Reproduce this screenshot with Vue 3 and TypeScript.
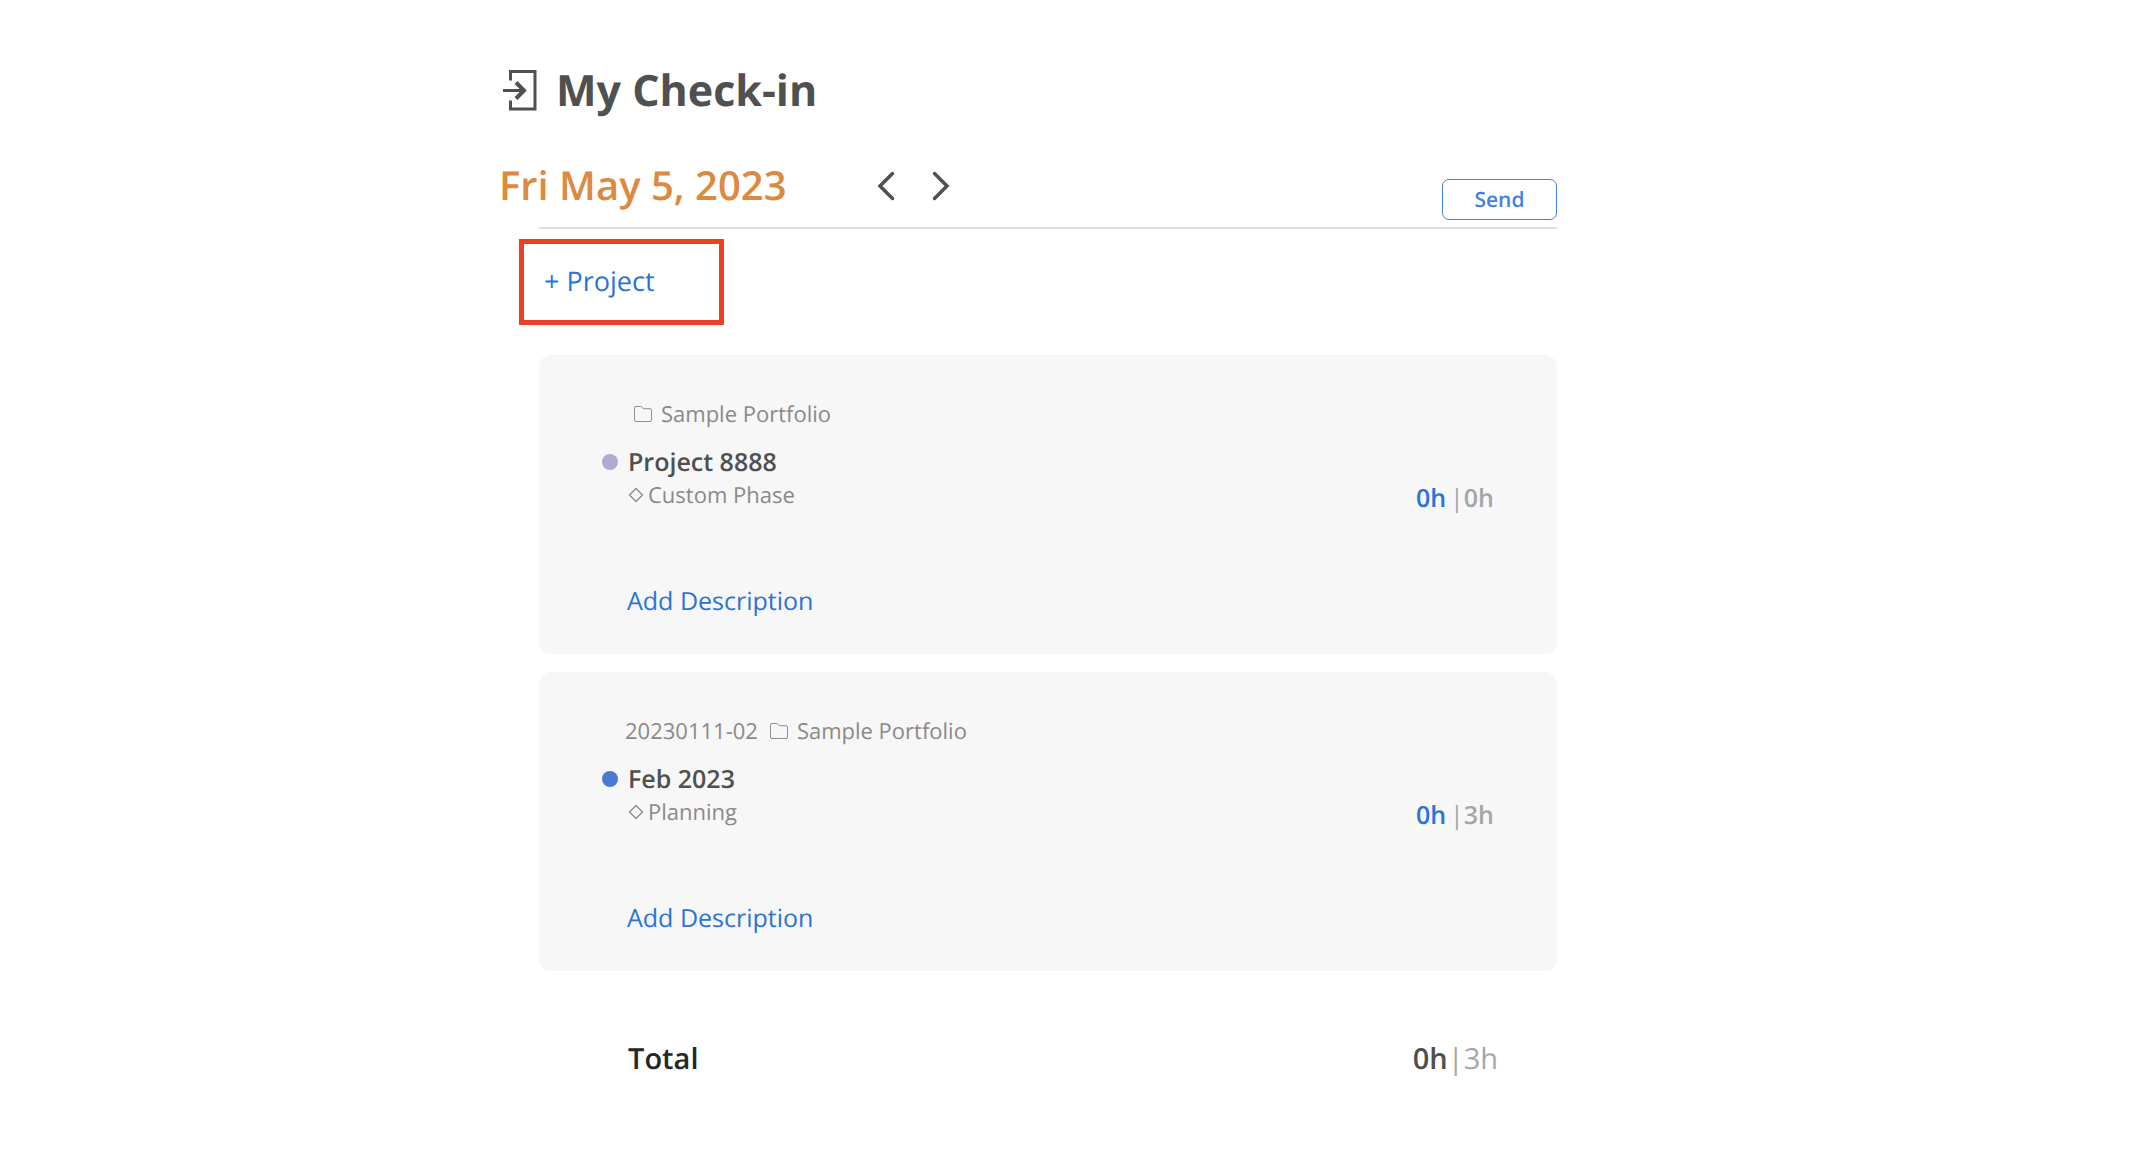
<script setup lang="ts">
interface Entry {
  id: number
  code: string
  portfolio: string
  project: string
  phase: string
  color: string
  spent: number
  planned: number
}

const entries: Entry[] = [
  { id: 1, code: '', portfolio: 'Sample Portfolio', project: 'Project 8888', phase: 'Custom Phase', color: '#b3a9d3', spent: 0, planned: 0 },
  { id: 2, code: '20230111-02', portfolio: 'Sample Portfolio', project: 'Feb 2023', phase: 'Planning', color: '#4a7ad2', spent: 0, planned: 3 },
]

const totalSpent = entries.reduce((sum, e) => sum + e.spent, 0)
const totalPlanned = entries.reduce((sum, e) => sum + e.planned, 0)
</script>

<template>
  <main class="page">
    <header class="head">
      <svg class="head-icon" width="36" height="44" viewBox="0 0 36 44" fill="none" stroke="#505050" aria-hidden="true">
        <path d="M7.500 12.500V3.500h24.500v37.500H7.500V32.500" stroke-width="3" />
        <path d="M0 22.500h21" stroke-width="3" />
        <path d="M13 14.500l8 8-8 8" stroke-width="4" />
      </svg>
      <h1>My Check-in</h1>
    </header>

    <div class="body">
      <div class="date-bar">
        <h2>Fri May 5, 2023</h2>
        <nav class="days">
          <button type="button" aria-label="Previous day">
            <svg width="19" height="30" viewBox="0 0 19 30" fill="none" stroke="#505050" stroke-width="3.500" stroke-linecap="round"><path d="M15.500 2.500L3 15l12.500 12.500" /></svg>
          </button>
          <button type="button" aria-label="Next day">
            <svg width="19" height="30" viewBox="0 0 19 30" fill="none" stroke="#505050" stroke-width="3.500" stroke-linecap="round"><path d="M3.500 2.500L16 15 3.500 27.500" /></svg>
          </button>
        </nav>
        <button type="button" class="send">Send</button>
      </div>

      <div class="highlight">
        <button type="button" class="link add-project">+ Project</button>
      </div>

      <section class="cards">
        <article v-for="e in entries" :key="e.id" class="card">
          <div class="meta">
            <span v-if="e.code" class="code">{{ e.code }}</span>
            <svg class="folder" width="20" height="18" viewBox="0 0 20 18" fill="none" stroke="#8f8f8f" aria-hidden="true">
              <path d="M1.500 3q0-1.500 1.500-1.500h4.500q1 0 1.600.8l.6.800q.5.600 1.300.600h6q1.500 0 1.500 1.500v9.800q0 1.500-1.500 1.500H3q-1.500 0-1.500-1.500z" />
            </svg>
            <span>{{ e.portfolio }}</span>
          </div>
          <div class="title">
            <span class="dot" :style="{ background: e.color }"></span>
            <h3>{{ e.project }}</h3>
          </div>
          <div class="work">
            <div class="phase">
              <svg width="16" height="16" viewBox="0 0 16 16" fill="none" stroke="#8a8a8a" stroke-width="1.300" aria-hidden="true"><path d="M8 1.500L14.500 8 8 14.500 1.500 8z" /></svg>
              <span>{{ e.phase }}</span>
            </div>
            <div class="hours">
              <span class="spent">{{ e.spent }}h</span>
              <span class="bar">|</span>
              <span class="planned">{{ e.planned }}h</span>
            </div>
          </div>
          <button type="button" class="link describe">Add Description</button>
        </article>
      </section>

      <footer class="total">
        <span>Total</span>
        <div class="sum">
          <span class="sum-spent">{{ totalSpent }}h</span><span class="sum-rest">|{{ totalPlanned }}h</span>
        </div>
      </footer>
    </div>
  </main>
</template>

<style>
body {
  background: #fff;
}
</style>

<style scoped>
.page {
  box-sizing: border-box;
  max-width: 1140px;
  margin: 0 auto;
  padding: 60px 83px 60px 0;
  font-family: "Open Sans", "Noto Sans", sans-serif;
  text-rendering: geometricPrecision;
  color: #505050;
}
h1, h2, h3 {
  margin: 0;
}
button {
  padding: 0;
  border: 0;
  background: none;
  font-family: inherit;
  text-rendering: inherit;
  cursor: pointer;
}
svg {
  display: block;
  flex: none;
}
.head {
  display: flex;
  align-items: center;
  gap: 17px;
  padding-left: 3px;
}
h1 {
  font-size: 43px;
  line-height: 60px;
  font-weight: 700;
}
.body {
  margin-left: 39px;
}
.date-bar {
  display: flex;
  align-items: flex-start;
  margin-top: 36px;
  padding-bottom: 7px;
  border-bottom: 2px solid #dcdcdc;
}
h2 {
  margin-left: -40px;
  font-size: 40px;
  line-height: 57px;
  font-weight: 600;
  color: #dd8a40;
}
.days {
  display: flex;
  align-items: center;
  gap: 35px;
  height: 60px;
  margin-left: 90px;
}
.send {
  width: 115px;
  height: 41px;
  margin: 23px 0 0 auto;
  border: 1px solid #4381e6;
  border-radius: 7px;
  font-size: 21px;
  line-height: 30px;
  font-weight: 600;
  color: #4381e6;
}
.link {
  color: #2b73d6;
  text-align: left;
}
.highlight {
  box-sizing: border-box;
  width: 205px;
  height: 86px;
  margin: 10px 0 30px -20px;
  padding: 19px 20px;
  border: 5px solid #ec4026;
}
.add-project {
  display: block;
  font-size: 27px;
  line-height: 36px;
}
.cards {
  display: flex;
  flex-direction: column;
  gap: 18px;
}
.card {
  padding: 44px 63px 35px;
  border-radius: 12px;
  background: #f7f7f7;
}
.meta {
  display: flex;
  align-items: center;
  gap: 8px;
  padding-left: 23px;
  font-size: 22px;
  line-height: 30px;
  color: #8a8a8a;
}
.folder {
  margin-left: 3px;
}
.folder:first-child {
  margin-left: 8px;
}
.title {
  display: flex;
  align-items: center;
  gap: 10px;
  margin-top: 15px;
}
.dot {
  width: 16px;
  height: 16px;
  border-radius: 50%;
}
h3 {
  font-size: 25px;
  line-height: 36px;
  font-weight: 600;
}
.work {
  display: flex;
  justify-content: space-between;
  padding-left: 26px;
}
.phase {
  display: flex;
  align-items: center;
  gap: 4px;
  height: 30px;
  font-size: 22px;
  line-height: 30px;
  color: #8a8a8a;
}
.hours {
  display: flex;
  font-size: 25px;
  line-height: 36px;
  color: #a6a6a6;
}
.spent {
  margin-right: 4px;
  font-weight: 600;
  color: #2b73d6;
}
.planned {
  font-weight: 600;
}
.describe {
  display: block;
  margin: 67px 0 0 25px;
  font-size: 25px;
  line-height: 36px;
}
.total {
  display: flex;
  justify-content: space-between;
  padding: 68px 59px 0 89px;
  font-size: 29px;
  line-height: 40px;
  font-weight: 600;
  color: #23272b;
}
.sum {
  color: #505050;
}
.sum-rest {
  font-weight: 400;
  color: #a6a6a6;
}
</style>
